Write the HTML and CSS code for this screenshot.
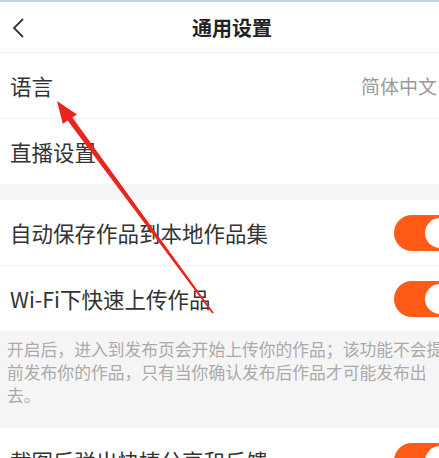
FILE: index.html
```html
<!DOCTYPE html>
<html>
<head>
    <title>通用设置</title>
    <link rel="stylesheet" href="styles.css">
</head>
<body>
    <div class="page">
        <div class="header">
            <svg class="back" width="14" height="22" viewBox="0 0 14 22">
                <path d="M12 2 L3 11 L12 20" fill="none" stroke="#333" stroke-width="1.8"/>
            </svg>
            <h1>通用设置</h1>
        </div>

        <div class="group">
            <div class="row">
                <span class="label">语言</span>
                <span class="value">简体中文</span>
                <svg class="more" width="10" height="16" viewBox="0 0 10 16">
                    <path d="M2 2 L8 8 L2 14" fill="none" stroke="#ccc" stroke-width="1.6"/>
                </svg>
            </div>
            <div class="row">
                <span class="label">直播设置</span>
            </div>
        </div>

        <div class="gap"></div>

        <div class="group">
            <div class="row">
                <span class="label">自动保存作品到本地作品集</span>
                <span class="switch on"></span>
            </div>
            <div class="row">
                <span class="label">Wi-Fi下快速上传作品</span>
                <span class="switch on"></span>
            </div>
        </div>

        <p class="desc">开启后，进入到发布页会开始上传你的作品；该功能不会提前发布你的作品，只有当你确认发布后作品才可能发布出去。</p>

        <div class="group">
            <div class="row">
                <span class="label">截图后弹出快捷分享和反馈</span>
                <span class="switch on"></span>
            </div>
        </div>
    </div>

    <!-- red annotation arrow pointing at 语言 -->
    <svg class="arrow" width="439" height="458" viewBox="0 0 439 458">
        <polygon fill="#e8261f" points="57,101 77,114.5 72.4,117.6 213.8,312.8 212.2,313.6 67.6,120.6 62.8,124"/>
    </svg>
</body>
</html>
```

FILE: styles.css
```css
body {
    margin: 0;
    padding: 0;
    width: 439px;
    height: 458px;
    overflow: hidden;
    position: relative;
    background-color: #fff;
    font-family: "Noto Sans CJK SC", "Noto Sans", sans-serif;
    color: #333;
}

.page {
    width: 470px;
    border-top: 2px solid #b5dbe8;
}

.header {
    height: 50px;
    display: flex;
    align-items: center;
    justify-content: center;
    position: relative;
    border-bottom: 1px solid #f0f0f0;
}

.header h1 {
    margin: 0 6px 0 0;
    font-size: 20px;
    font-weight: bold;
    color: #222;
}

.back {
    position: absolute;
    left: 11px;
    top: 15px;
}

.row {
    height: 65px;
    display: flex;
    align-items: center;
    padding: 0 12px 0 10px;
    border-bottom: 1px solid #f0f0f0;
}

.row:last-child {
    border-bottom: none;
}

.label {
    flex: 1;
    font-size: 21.5px;
    color: #333;
}

.value {
    font-size: 19px;
    color: #999;
}

.more {
    margin-left: 11px;
}

.gap {
    height: 16px;
    background-color: #f5f5f5;
}

.switch {
    width: 64px;
    height: 36px;
    border-radius: 18px;
    background-color: #ff5b17;
    position: relative;
}

.switch.on::after {
    content: "";
    position: absolute;
    right: 3px;
    top: 3px;
    width: 30px;
    height: 30px;
    border-radius: 50%;
    background-color: #fff;
}

.desc {
    margin: 0;
    padding: 7px 18px 21px 7px;
    background-color: #f5f5f5;
    font-size: 16.8px;
    line-height: 23px;
    color: #aaa;
}

.arrow {
    position: absolute;
    left: 0;
    top: 0;
    pointer-events: none;
}
```
